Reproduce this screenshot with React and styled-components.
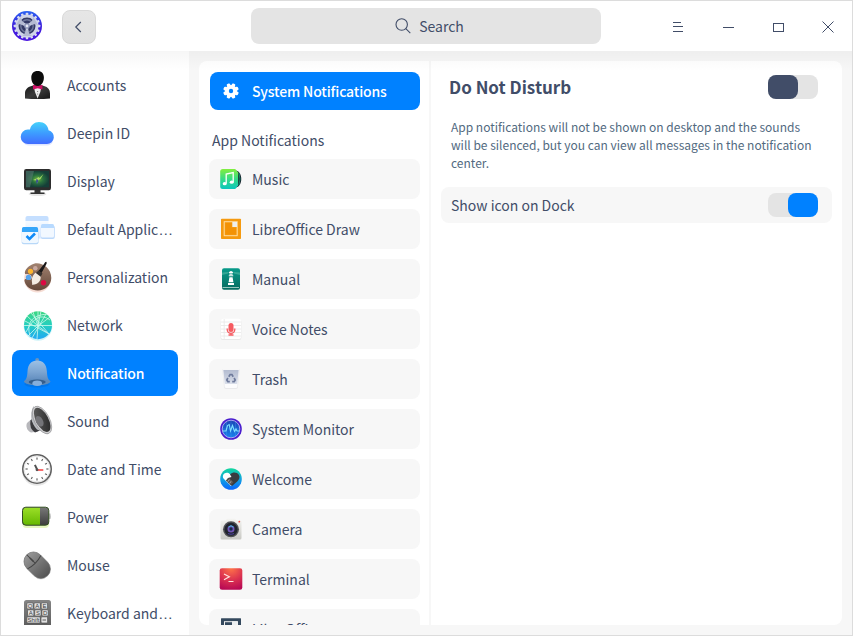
import React from "react";
import styled, { createGlobalStyle, css } from "styled-components";

const ink = "#414d68";
const accent = "#0081ff";

const GlobalStyle = createGlobalStyle`
  *, *::before, *::after { box-sizing: border-box; }
  body {
    margin: 0;
    font-family: "Noto Sans CJK SC", "Noto Sans", sans-serif;
    font-size: 14px;
    color: ${ink};
  }
  button { font: inherit; color: inherit; border: 0; background: none; padding: 0; }
`;

const Window = styled.div`
  display: flex;
  flex-direction: column;
  width: 853px;
  height: 636px;
  border: 1px solid #dcdcdc;
  background: #fff;
  overflow: hidden;
`;

const TitleBar = styled.header`
  display: flex;
  align-items: center;
  flex: 0 0 50px;
  padding-left: 11px;
`;

const Logo = styled.svg`
  flex: none;
  width: 30px;
  height: 30px;
`;

const BackButton = styled.button`
  display: grid;
  place-items: center;
  width: 34px;
  height: 34px;
  margin: 2px 0 0 20px;
  border: 1px solid #d9d9d9;
  border-radius: 8px;
  background: linear-gradient(#e6e6e6, #e2e2e2);
`;

const SearchField = styled.div`
  display: flex;
  align-items: center;
  justify-content: center;
  gap: 8px;
  width: 350px;
  height: 36px;
  margin-left: 155px;
  padding-left: 7px;
  border-radius: 8px;
  background: #e4e4e4;
  line-height: 20px;
`;

const WindowControls = styled.div`
  display: flex;
  height: 50px;
  margin-left: auto;
`;

const ControlButton = styled.button`
  display: grid;
  place-items: center;
  width: 50px;
  padding: 2px 0 0 2px;
`;

const LineIcon = styled.svg`
  display: block;
  fill: none;
  stroke: ${ink};
  stroke-width: ${(p) => p.$weight ?? 1};
`;

const Body = styled.div`
  position: relative;
  display: flex;
  flex: 1;
  min-height: 0;
  background: #f7f7f7;

  &::after {
    content: "";
    position: absolute;
    inset: 0 0 auto;
    height: 20px;
    background: linear-gradient(rgba(0, 0, 0, 0.036), rgba(0, 0, 0, 0));
    pointer-events: none;
  }
`;

const Sidebar = styled.nav`
  width: 188px;
  padding: 11px 11px 10px;
  background: #fff;
`;

const SidebarList = styled.ul`
  display: flex;
  flex-direction: column;
  gap: 2px;
  height: 100%;
  margin: 0;
  padding: 0;
  list-style: none;
  overflow: hidden;
`;

const SidebarItem = styled.li`
  display: flex;
  align-items: center;
  flex: 0 0 46px;
  gap: 12px;
  padding: 0 4px 0 7px;
  border-radius: 8px;
  white-space: nowrap;
  line-height: 22px;
  ${(p) =>
    p.$active &&
    css`
      background: ${accent};
      color: #fff;
      font-weight: 500;
      letter-spacing: -0.12px;
    `}
`;

const SidebarIcon = styled.svg`
  flex: none;
  width: 36px;
  height: 36px;
  overflow: visible;
`;

const Label = styled.span`
  white-space: nowrap;
`;

const Ellipsis = styled.span`
  font-family: "Liberation Sans", sans-serif;
  font-size: 15px;
  line-height: 1;
`;

const Panel = styled.main`
  display: flex;
  width: 643px;
  margin: 10px;
  border-radius: 8px;
  background: #fff;
  overflow: hidden;
`;

const AppColumn = styled.section`
  display: flex;
  flex-direction: column;
  width: 232px;
  padding: 11px 9px 0 10px;
  border-right: 2px solid #f7f7f7;
  overflow: hidden;
`;

const SystemItem = styled.div`
  display: flex;
  align-items: center;
  flex: 0 0 38px;
  gap: 9px;
  margin-left: 1px;
  padding-left: 9px;
  border-radius: 8px;
  background: ${accent};
  color: #fff;
  font-weight: 500;
  letter-spacing: -0.15px;
  line-height: 22px;
`;

const GroupTitle = styled.h2`
  flex: 0 0 22px;
  margin: 19px 0 8px 3px;
  font-size: 14px;
  font-weight: 400;
  line-height: 22px;
`;

const AppItem = styled.div`
  display: flex;
  align-items: center;
  flex: 0 0 40px;
  gap: 9px;
  margin-bottom: 10px;
  padding-left: 10px;
  border-radius: 8px;
  background: #f7f7f7;
  line-height: 22px;
`;

const AppIcon = styled.svg`
  flex: none;
  width: 24px;
  height: 24px;
`;

const Detail = styled.section`
  display: flex;
  flex-direction: column;
  flex: 1;
  padding: 8px 10px;
`;

const Heading = styled.div`
  display: flex;
  align-items: center;
  justify-content: space-between;
  height: 36px;
  padding: 0 14px 0 8px;
`;

const Title = styled.h1`
  margin: 0;
  font-size: 17px;
  font-weight: 700;
  line-height: 26px;
`;

const Description = styled.p`
  margin: 13px 0 15px;
  padding: 0 18px 0 10px;
  color: #526a7f;
  font-size: 12px;
  line-height: 18px;
`;

const SettingRow = styled.div`
  display: flex;
  align-items: center;
  justify-content: space-between;
  height: 36px;
  padding: 0 14px 0 10px;
  border-radius: 8px;
  background: #f7f7f7;
  line-height: 22px;
`;

const SwitchTrack = styled.button`
  display: flex;
  justify-content: ${(p) => (p.$on ? "flex-end" : "flex-start")};
  width: 50px;
  height: 24px;
  border-radius: 8px;
  background: #e4e4e4;
`;

const SwitchThumb = styled.span`
  width: 30px;
  height: 24px;
  border-radius: 8px;
  background: ${(p) => (p.$on ? accent : ink)};
`;

const Switch = ({ on, label }) => (
  <SwitchTrack $on={on} role="switch" aria-checked={on} aria-label={label}>
    <SwitchThumb $on={on} />
  </SwitchTrack>
);

const Defs = ({ id, stops, diagonal }) => (
  <defs>
    <linearGradient id={id} x1="0" y1="0" x2={diagonal ? 1 : 0} y2="1">
      {stops.map((c, i) => (
        <stop key={i} offset={i / (stops.length - 1)} stopColor={c} />
      ))}
    </linearGradient>
  </defs>
);

const range = (n) => Array.from({ length: n }, (_, i) => i);

const GearLogo = () => (
  <Logo viewBox="0 0 30 30">
    <Defs id="logoBg" stops={["#2a63f2", "#3d20dc", "#4a14e0"]} />
    <circle cx="15" cy="15" r="15" fill="url(#logoBg)" />
    {range(16).map((i) => (
      <rect key={i} x="13.8" y="1.7" width="2.4" height="4" rx=".5" fill="#d8dcf0" transform={`rotate(${i * 22.5} 15 15)`} />
    ))}
    <circle cx="15" cy="15" r="10" fill="#343a66" stroke="#cfd4e8" strokeWidth="3" />
    <circle cx="15" cy="15" r="6.200" fill="none" stroke="#70789c" strokeWidth="1.400" />
    {range(3).map((i) => (
      <g key={i} transform={`rotate(${60 + i * 120} 15 15)`}>
        <path d="M13.7 15v9.500h2.600V15z" fill="#c8cde0" transform="rotate(60 15 15)" />
        <path d="M10 25Q13.600 22.500 13.700 19h2.600q.1 3.500 3.700 6z" fill="#b4bad2" transform="rotate(60 15 15)" />
      </g>
    ))}
    <circle cx="15" cy="15" r="2.800" fill="#8d95b8" />
    <circle cx="15" cy="15" r="1.400" fill="#e6e9f4" />
  </Logo>
);

const sidebarEntries = [
  {
    label: "Accounts",
    art: (
      <>
        <Defs id="suit" stops={["#151515", "#3a3a3a", "#161616"]} diagonal />
        <path d="M6 31.500v-5c0-4 2.500-6.500 6.500-7.500l4.500-1.500h3.500l4.500 1.500c4 1 6 3.500 6 7.500v5q-12.500 1-25 0z" fill="url(#suit)" />
        <path d="M14.800 19.500h7.600L21.300 25l-2.700 6.500L16 25z" fill="#eee" />
        <path d="M18.600 4c4 0 6.300 2.700 6.300 6.500 0 4.500-2.500 8.500-6.300 8.500s-6.300-4-6.300-8.500C12.300 6.700 14.600 4 18.600 4z" fill="#0c0c0c" />
        <path d="M14 17.800l4.700 1.500 4.700-1.500v4.600l-4.700-1.200-4.700 1.200z" fill="#cc0f64" />
        <circle cx="18.700" cy="24.500" r=".5" fill="#555" />
        <circle cx="18.700" cy="27" r=".5" fill="#555" />
      </>
    ),
  },
  {
    label: "Deepin ID",
    art: (
      <>
        <Defs id="cloud" stops={["#45d2fa", "#3d9dff", "#416dff"]} />
        <path d="M10 30.500h18a7 7 0 0 0 6-4H4a7 7 0 0 0 6 4z" fill="#416dff" opacity=".18" />
        <path d="M9 29a7.200 7.200 0 0 1-.2-14.400h2.200C11.600 10.300 15.500 7 20 7c5 0 9.200 3.500 9.500 8.200A7 7 0 0 1 28 29z" fill="url(#cloud)" />
      </>
    ),
  },
  {
    label: "Display",
    art: (
      <>
        <defs>
          <radialGradient id="screen">
            <stop offset="0" stopColor="#6cb53a" />
            <stop offset=".5" stopColor="#28703f" />
            <stop offset="1" stopColor="#153f38" />
          </radialGradient>
        </defs>
        <ellipse cx="18.500" cy="31" rx="9" ry="2" fill="#000" opacity=".1" />
        <path d="M15.500 26h6v3.500h4V31h-14v-1.500h4z" fill="#333" />
        <rect x="5" y="6" width="27" height="21.300" rx="2.200" fill="#2d2d2d" />
        <rect x="7" y="8" width="23" height="16.300" fill="url(#screen)" />
        <path d="M7 8h8l-4 16.300H7z" fill="#64847a" opacity=".5" />
        <path d="M14 17l3.500-1.500 2-1.500 1 1L24.500 11l-3 5-2 1-1 3.500-1-3z" fill="#a5d865" />
        <path d="M17.500 15.500l2 2-1.500 4-1-3z" fill="#3b5290" />
      </>
    ),
  },
  {
    label: "Default Applic",
    truncated: true,
    art: (
      <>
        <Defs id="win" stops={["#fff", "#d9eaff"]} />
        <rect x="6.500" y="5" width="23" height="22.500" rx="2" fill="url(#win)" />
        <path d="M6.500 10V7a2 2 0 0 1 2-2h19a2 2 0 0 1 2 2v3z" fill="#c5dfff" />
        <rect x="21.800" y="14.500" width="14" height="13.500" rx="2" fill="#bdd9fa" />
        <rect x="22" y="13" width="13" height="13.500" rx="1.500" fill="#f2f8ff" />
        <path d="M22 17v-2.500A1.500 1.500 0 0 1 23.500 13h10a1.500 1.500 0 0 1 1.500 1.500V17z" fill="#b8daff" />
        <rect x="2.700" y="17" width="16.800" height="16.300" rx="2" fill="#b8d8f8" />
        <rect x="3" y="16" width="16" height="16" rx="1.800" fill="#f0f8ff" />
        <path d="M3 21v-3.500A1.500 1.500 0 0 1 4.500 16h13a1.500 1.500 0 0 1 1.500 1.500V21z" fill="#35a6fa" />
        <path d="M7.500 25l3 3 5.500-5.500" fill="none" stroke="#118cf8" strokeWidth="2.500" />
      </>
    ),
  },
  {
    label: "Personalization",
    art: (
      <>
        <Defs id="wood" stops={["#a18270", "#65483a"]} />
        <circle cx="18.500" cy="20" r="13.500" fill="#e08060" opacity=".28" />
        <path d="M15 4.700C21 2.500 32.500 8 32.300 19c-.2 7.500-6.300 12.500-13.500 12.500-6.500 0-12-3.500-13.300-9.500-.5-2.500 2-2.500 4-1.500 2.500 1 4.500-2 2.500-4-2-2.200-6-.5-6.200-2.500C6 10.500 9.500 6.300 15 4.700z" fill="url(#wood)" />
        <circle cx="11.500" cy="12.300" r="2.600" fill="#fdb52e" />
        <circle cx="16.300" cy="9.300" r="2.300" fill="#c9a9a0" />
        <circle cx="9.500" cy="18.400" r="2.700" fill="#56a4ed" />
        <circle cx="24.500" cy="23.700" r="2.700" fill="#dc0a43" />
        <path d="M19.500 12L25 5q1.500-2.700 2.500-2 .8.700-.7 3.200L22.500 14z" fill="#191717" />
        <path d="M19.500 11.500l4 3-2 3.500-5-3.500z" fill="#37312e" />
        <path d="M16.500 13.700l5.200 4c.3 4-3 8.300-8.700 8 .5-1.500-.2-2.500-.2-4.500 0-3.500 2-6 3.700-7.500z" fill="#f4ece4" />
      </>
    ),
  },
  {
    label: "Network",
    art: (
      <>
        <Defs id="globe" stops={["#3cd780", "#24cfc0", "#20a8f4"]} />
        <circle cx="19" cy="19.500" r="14.300" fill="#36cfe4" opacity=".25" />
        <circle cx="19" cy="18.200" r="14" fill="url(#globe)" />
        <g fill="none" stroke="#dffff2" strokeWidth=".8" opacity=".9">
          <path d="M5 18.500h28M19 19V4M19 19L8 9M19 19L9 29M19 19l11 8M19 19l3-15M19 19l-5-14M19 19l-1 13M19 19L31 10M12 6l18 21M27 7L13 31M6 14l24 13" />
          <path d="M7 25Q18 3 31 13M11 29Q5 9 28 7" />
        </g>
      </>
    ),
  },
  {
    label: "Notification",
    active: true,
    art: (
      <>
        <Defs id="bell" stops={["#9cc1e6", "#7ca4d0", "#5482b6"]} />
        <ellipse cx="18" cy="29" rx="12.500" ry="3.500" fill="#004a99" opacity=".2" />
        <circle cx="18.200" cy="4.800" r="1.900" fill="#6a93bd" />
        <path d="M5 26.500c2.500-2.500 3.200-4.500 3.500-10C8.900 9 12.500 5.500 18.200 5.500S27.500 9 27.900 16.500c.3 5.500 1 7.500 3.500 10-1.500 3.200-24.900 3.200-26.400 0z" fill="url(#bell)" />
        <path d="M5 26.200c4-2.700 22.400-2.700 26.400 0-.5 5.500-25.900 5.500-26.400 0z" fill="#5f8bb9" />
        <ellipse cx="18.200" cy="27" rx="8.500" ry="2.400" fill="#355e8c" />
        <ellipse cx="18.200" cy="28.300" rx="4.800" ry="2.700" fill="#86aedb" />
      </>
    ),
  },
  {
    label: "Sound",
    art: (
      <>
        <Defs id="cone" stops={["#606060", "#252525"]} diagonal />
        <path d="M8 20c-1.500 3 0 8 4 9.500l7-1-7-12z" fill="#b8b8bc" />
        <path d="M11.500 17.500q-1.500 8 4.500 12l5-2-7-13z" fill="#3b3b3e" />
        <path d="M14.500 3C10 12 12 20 18 26.500l11 5z" fill="#babcc0" />
        <ellipse cx="23" cy="17" rx="7.500" ry="15.100" transform="rotate(-28 23 17)" fill="#d0d0d2" stroke="#8c8c8e" strokeWidth=".6" />
        <ellipse cx="23.200" cy="16.800" rx="6.200" ry="13.300" transform="rotate(-28 23.200 16.800)" fill="url(#cone)" />
        <ellipse cx="20.500" cy="18.300" rx="3.500" ry="5.700" transform="rotate(-28 20.500 18.300)" fill="#747478" />
      </>
    ),
  },
  {
    label: "Date and Time",
    art: (
      <>
        <circle cx="18" cy="19.800" r="15" fill="#000" opacity=".1" />
        <circle cx="18" cy="18" r="14.200" fill="#fff" stroke="#606060" strokeWidth="1.600" />
        <circle cx="18" cy="18" r="12.900" fill="none" stroke="#dadada" strokeWidth=".7" />
        {range(12).map((i) => (
          <rect key={i} x="17.400" y="6.500" width="1.200" height="2.200" fill="#666" transform={`rotate(${i * 30} 18 18)`} />
        ))}
        <path d="M15 14.300l1.800-.8 2.400 5-1.700 1z" fill="#505050" />
        <path d="M18 18.200h6.300v1.600H18z" fill="#f54848" />
        <circle cx="18" cy="18.800" r="1.400" fill="#555" />
      </>
    ),
  },
  {
    label: "Power",
    art: (
      <>
        <Defs id="charge" stops={["#9cdf28", "#65b800"]} />
        <Defs id="cell" stops={["#787878", "#3d3d3d"]} />
        <rect x="3.500" y="11" width="26.500" height="18" rx="4" fill="#b8e948" opacity=".35" />
        <path d="M29 14.500h2.500q1 3.500 0 5.500H29z" fill="#c4c4c4" />
        <rect x="3.500" y="8.200" width="26.300" height="18" rx="3.300" fill="url(#cell)" />
        <path d="M7 8.500h14v17.400H7A3.200 3.200 0 0 1 4 22.700v-11A3.200 3.200 0 0 1 7 8.500z" fill="url(#charge)" />
        <rect x="3.500" y="8.200" width="26.300" height="18" rx="3.300" fill="none" stroke="#355024" />
      </>
    ),
  },
  {
    label: "Mouse",
    art: (
      <>
        <Defs id="mouse" stops={["#979797", "#535353"]} />
        <rect x="8.500" y="4.800" width="19.500" height="29" rx="9.500" transform="rotate(-45 18.200 19)" fill="#000" opacity=".12" />
        <g transform="rotate(-45 18 18)">
          <path d="M8.500 13a9.500 9.500 0 0 1 19 0v10.500a9.500 9.500 0 0 1-19 0z" fill="url(#mouse)" stroke="#666" strokeWidth=".6" />
          <path d="M8.500 14q9.500 3 19 0M18 3.500v11.800" fill="none" stroke="#454545" strokeWidth="1" />
          <path d="M18 8v5" stroke="#444" strokeWidth="1.500" />
        </g>
      </>
    ),
  },
  {
    label: "Keyboard and",
    truncated: true,
    art: (
      <>
        <Defs id="board" stops={["#858585", "#5c5c5c"]} />
        <rect x="5" y="5" width="27" height="27" rx="2.500" fill="url(#board)" />
        <g fill="#e2e2e2" stroke="#505050" strokeWidth=".7">
          <rect x="7.800" y="7.800" width="6.400" height="6.200" rx="1" />
          <rect x="15" y="7.800" width="6.400" height="6.200" rx="1" />
          <rect x="22.200" y="7.800" width="6.400" height="6.200" rx="1" />
          <rect x="8.500" y="14.800" width="6.400" height="6.200" rx="1" />
          <rect x="15.700" y="14.800" width="6.400" height="6.200" rx="1" />
          <rect x="22.900" y="14.800" width="6.400" height="6.200" rx="1" />
          <rect x="7.800" y="21.800" width="13.500" height="6.200" rx="1" />
          <rect x="22" y="21.800" width="6.600" height="6.200" rx="1" />
        </g>
        <g fill="#3c3c3c" fontFamily="Liberation Sans, sans-serif" fontSize="6" textAnchor="middle">
          <text x="11" y="13">Q</text>
          <text x="18.200" y="13">A</text>
          <text x="25.400" y="13">E</text>
          <text x="11.700" y="20">A</text>
          <text x="18.900" y="20">S</text>
          <text x="26.100" y="20">D</text>
          <text x="14.500" y="27">Shift</text>
        </g>
        <path d="M23.500 25h3.500" stroke="#3c3c3c" strokeWidth=".8" />
      </>
    ),
  },
];

const apps = [
  {
    label: "Music",
    art: (
      <>
        <Defs id="music" stops={["#83ee3e", "#35dc86", "#0bc6bd"]} />
        <path d="M17 3.500c7 1.500 7 15.500 0 17z" fill="#15202a" />
        <path d="M20 6q2 6 0 12" fill="none" stroke="#13b98b" strokeWidth=".7" />
        <path d="M3.700 2h12.500l3 3.500v13L16.200 22H3.700q-2.500 0-2.500-2.500v-15Q1.200 2 3.700 2z" fill="url(#music)" />
        <path d="M7.200 16.500V7l7-1.400V15" fill="none" stroke="#fff" strokeWidth="1.300" />
        <ellipse cx="5.700" cy="16.700" rx="2" ry="1.600" fill="#fff" />
        <ellipse cx="12.700" cy="15.200" rx="2" ry="1.600" fill="#fff" />
      </>
    ),
  },
  {
    label: "LibreOffice Draw",
    art: (
      <>
        <rect x="2" y="1.700" width="20" height="20.300" rx=".8" fill="#f59a10" />
        <rect x="5.200" y="4.700" width="13" height="14" fill="none" stroke="#ffdda0" strokeWidth="1" />
        <path d="M6.500 6h6v5H17v6.500H6.500z" fill="#f39205" />
        <path d="M13.300 5h4.700v5h-4.700z" fill="#eeeeec" />
      </>
    ),
  },
  {
    label: "Manual",
    art: (
      <>
        <Defs id="manual" stops={["#079a89", "#076b60"]} />
        <rect x="3" y="1.300" width="18" height="21.500" rx="2" fill="url(#manual)" />
        <path d="M3.500 20.500H20" stroke="#bcdcd4" strokeWidth=".8" />
        <path d="M3 8l6-1.500V5l-6 .5zM21 8l-6-1.500V5l6 .5z" fill="#55b8a5" opacity=".6" />
        <path d="M9.500 6q2.500-4 5 0z" fill="#fff" />
        <path d="M10.400 6.500h3.200v1.300h-3.200zM9.800 8.300h4.400v1h-4.400zM10.400 10.300h3.200l.8 5H9.600zM9 15.900h6V18H9z" fill="#fff" />
      </>
    ),
  },
  {
    label: "Voice Notes",
    art: (
      <>
        <rect x="1.700" y="2.500" width="20.600" height="20.500" rx="2" fill="#e8e8e8" />
        <rect x="2" y="1.700" width="20" height="20.300" rx="2" fill="#fff" />
        <path d="M2 5h20M2 8.500h20M2 12h20M2 15.500h20M2 19h20M5.200 2v20" stroke="#e7e7e7" strokeWidth=".8" />
        <rect x="9.500" y="6" width="5" height="9" rx="2.500" fill="#f65b61" />
        <path d="M8.200 11.500v1a3.800 3.800 0 0 0 7.600 0v-1M12 16v2.300M9.500 18h5" fill="none" stroke="#f65b61" strokeWidth="1.300" />
      </>
    ),
  },
  {
    label: "Trash",
    art: (
      <>
        <Defs id="bin" stops={["#b4bcd0", "#d9deea"]} />
        <path d="M3.300 2.500h17.400L19 20q-.2 2-2 2H7q-1.800 0-2-2z" fill="#e9e9eb" />
        <path d="M4 2.500h16L18.300 19.500q-.2 1.500-1.600 1.500H7.300q-1.400 0-1.600-1.500z" fill="#fcfcfd" />
        <path d="M4.300 3h15.400l-1.500 14H5.800z" fill="url(#bin)" />
        <g fill="none" stroke="#6e7a9b" strokeWidth="1.700">
          <path d="M9.800 9.700l1.300-2.200h1.800l1.300 2.200M15.100 11l1.100 2-1 1.700h-2M10.800 14.700h-2l-1-1.700 1.100-2" />
        </g>
      </>
    ),
  },
  {
    label: "System Monitor",
    art: (
      <>
        <Defs id="monitor" stops={["#1b45b5", "#1682ed"]} />
        <circle cx="12" cy="12" r="10.800" fill="#4a1dce" />
        <circle cx="12" cy="12" r="8.800" fill="url(#monitor)" stroke="#b5b2f5" strokeWidth=".9" />
        <path d="M12 3.500v17M3.500 12h17M7.500 5v14M16.500 5v14" stroke="#5caeff" strokeWidth=".4" opacity=".6" />
        <path d="M4 14h3L8.500 8.500l1.700-1L11.500 14l2-5.500 2 6 1.500-2.500 1 2H20" fill="none" stroke="#7ee0ff" strokeWidth="1.100" />
      </>
    ),
  },
  {
    label: "Welcome",
    art: (
      <>
        <Defs id="welcome" stops={["#12d89c", "#12a4e0", "#0964ff"]} />
        <circle cx="12" cy="12" r="10.800" fill="url(#welcome)" />
        <path d="M12 19l-7.500-7.500C2.500 8 6 4.500 9.500 6L14 9.500l4 3z" fill="#fff" />
        <path d="M11 7.500c3-2.800 7-2.300 8.800.3 1.500 2.300.4 4.700-1.300 6.400L13 19l-6-5.500 2-2.500 3.500-1z" fill="#393c40" />
        <path d="M7 13.500l3-2.500 4.500 4.300-3 3z" fill="#5c5652" />
        <path d="M8.500 14.700l2-1.800M10.300 16.200l2-1.800" stroke="#ddd" strokeWidth=".7" />
      </>
    ),
  },
  {
    label: "Camera",
    art: (
      <>
        <Defs id="camera" stops={["#f4f4f1", "#c9c9c4"]} />
        <path d="M3 3.500h3.500L8 1.800h8l1.500 1.700H21q1.500 0 1.500 1.500v16q0 1.500-1.500 1.500H3q-1.500 0-1.500-1.500V5q0-1.500 1.500-1.500z" fill="url(#camera)" />
        <circle cx="12" cy="12.300" r="8" fill="#505154" />
        <circle cx="12" cy="12.300" r="6.500" fill="#21242d" />
        <circle cx="12" cy="12" r="3.500" fill="#7257b6" />
        <circle cx="12" cy="12" r="1.700" fill="#192749" />
        <path d="M9.500 10a3.500 3.500 0 0 1 5 0" fill="none" stroke="#49b9e1" strokeWidth="1" />
        <path d="M9 16.500q3 1.500 6 0" fill="none" stroke="#4c419a" strokeWidth="1.200" />
        <circle cx="20.300" cy="4.700" r=".9" fill="#ef4c45" />
      </>
    ),
  },
  {
    label: "Terminal",
    art: (
      <>
        <defs>
          <radialGradient id="term" cx=".5" cy="0" r="1">
            <stop offset="0" stopColor="#ff7548" />
            <stop offset=".55" stopColor="#dc3350" />
            <stop offset="1" stopColor="#b90a54" />
          </radialGradient>
        </defs>
        <rect x=".7" y="1.200" width="22.600" height="21.600" rx="2.300" fill="url(#term)" />
        <path d="M5 7l5.300 2.800L5 12.700M9.500 14.500h5" fill="none" stroke="#ffe3df" strokeWidth="1.200" />
      </>
    ),
  },
  {
    label: "LibreOffice",
    art: (
      <>
        <rect x="2" y="1.300" width="20" height="21" rx=".5" fill="#34495e" />
        <rect x="5.500" y="4.700" width="13" height="14" fill="#34495e" stroke="#f0f0f0" />
        <path d="M13 4.200h5.500V10H13z" fill="#eceff1" />
      </>
    ),
  },
];

export default function App() {
  return (
    <>
      <GlobalStyle />
      <Window>
        <TitleBar>
          <GearLogo />
          <BackButton aria-label="Back">
            <LineIcon width="12" height="12" viewBox="0 0 12 12" $weight={1.2}>
              <path d="M7.800 1L2.800 6l5 5" />
            </LineIcon>
          </BackButton>
          <SearchField>
            <LineIcon width="16" height="16" viewBox="0 0 16 16" $weight={1.1}>
              <circle cx="6.700" cy="6.500" r="5.700" />
              <path d="M10.800 10.600l4.500 4.500" />
            </LineIcon>
            <span>Search</span>
          </SearchField>
          <WindowControls>
            <ControlButton aria-label="Menu">
              <LineIcon width="12" height="12" viewBox="0 0 12 12">
                <path d="M1 1.500h8M1 5.500h10M1 10.500h10" />
              </LineIcon>
            </ControlButton>
            <ControlButton aria-label="Minimize">
              <LineIcon width="12" height="12" viewBox="0 0 12 12">
                <path d="M1 6.500h11" />
              </LineIcon>
            </ControlButton>
            <ControlButton aria-label="Maximize">
              <LineIcon width="12" height="12" viewBox="0 0 12 12">
                <rect x="1.500" y="2.500" width="10" height="8" />
              </LineIcon>
            </ControlButton>
            <ControlButton aria-label="Close">
              <LineIcon width="12" height="12" viewBox="0 0 12 12">
                <path d="M.5.500l11 11M11.500.500l-11 11" />
              </LineIcon>
            </ControlButton>
          </WindowControls>
        </TitleBar>
        <Body>
          <Sidebar>
            <SidebarList>
              {sidebarEntries.map(({ label, art, active, truncated }) => (
                <SidebarItem key={label} $active={active}>
                  <SidebarIcon viewBox="0 0 36 36">{art}</SidebarIcon>
                  <Label>
                    {label}
                    {truncated && <Ellipsis>…</Ellipsis>}
                  </Label>
                </SidebarItem>
              ))}
            </SidebarList>
          </Sidebar>
          <Panel>
            <AppColumn>
              <SystemItem>
                <AppIcon viewBox="0 0 24 24">
                  <g fill="#fff">
                    {range(4).map((i) => (
                      <rect key={i} x="10.200" y="4.200" width="3.600" height="15.600" rx="1.200" transform={`rotate(${22.5 + i * 45} 12 12)`} />
                    ))}
                    <circle cx="12" cy="12" r="6" />
                  </g>
                  <circle cx="12" cy="12" r="2.200" fill={accent} />
                </AppIcon>
                <Label>System Notifications</Label>
              </SystemItem>
              <GroupTitle>App Notifications</GroupTitle>
              {apps.map(({ label, art }) => (
                <AppItem key={label}>
                  <AppIcon viewBox="0 0 24 24">{art}</AppIcon>
                  <Label>{label}</Label>
                </AppItem>
              ))}
            </AppColumn>
            <Detail>
              <Heading>
                <Title>Do Not Disturb</Title>
                <Switch on={false} label="Do Not Disturb" />
              </Heading>
              <Description>
                App notifications will not be shown on desktop and the sounds will be silenced, but you can view all
                messages in the notification center.
              </Description>
              <SettingRow>
                <span>Show icon on Dock</span>
                <Switch on label="Show icon on Dock" />
              </SettingRow>
            </Detail>
          </Panel>
        </Body>
      </Window>
    </>
  );
}
